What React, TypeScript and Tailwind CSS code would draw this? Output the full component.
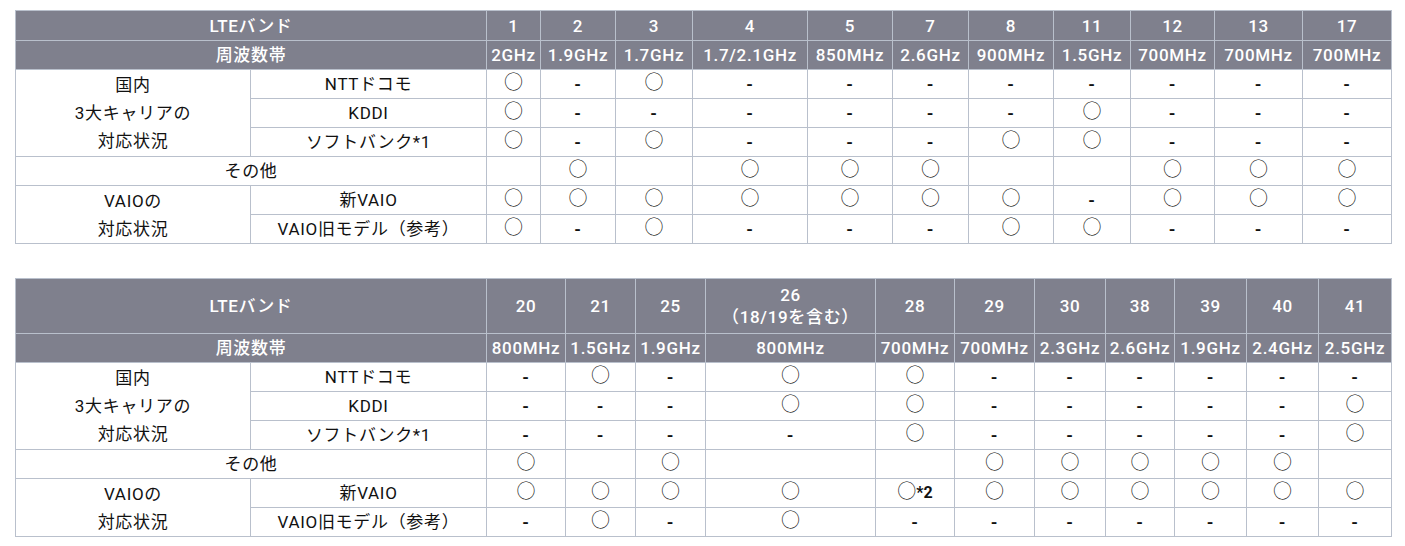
const font = { fontFamily: '"Roboto", "Noto Sans CJK JP", sans-serif' };

type Table = {
  widths: number[];
  bands: string[][];
  freqs: string[];
  rows: string[][];
  headHeight: number;
};

const tables: Table[] = [
  {
    widths: [235, 236, 54, 75, 77, 115, 85, 76, 85, 77, 84, 88, 89],
    bands: [['1'], ['2'], ['3'], ['4'], ['5'], ['7'], ['8'], ['11'], ['12'], ['13'], ['17']],
    freqs: ['2GHz', '1.9GHz', '1.7GHz', '1.7/2.1GHz', '850MHz', '2.6GHz', '900MHz', '1.5GHz', '700MHz', '700MHz', '700MHz'],
    rows: [
      ['○', '-', '○', '-', '-', '-', '-', '-', '-', '-', '-'],
      ['○', '-', '-', '-', '-', '-', '-', '○', '-', '-', '-'],
      ['○', '-', '○', '-', '-', '-', '○', '○', '-', '-', '-'],
      ['', '○', '', '○', '○', '○', '', '', '○', '○', '○'],
      ['○', '○', '○', '○', '○', '○', '○', '-', '○', '○', '○'],
      ['○', '-', '○', '-', '-', '-', '○', '○', '-', '-', '-'],
    ],
    headHeight: 30,
  },
  {
    widths: [235, 236, 79, 70, 70, 170, 79, 80, 71, 69, 72, 72, 73],
    bands: [['20'], ['21'], ['25'], ['26', '（18/19を含む）'], ['28'], ['29'], ['30'], ['38'], ['39'], ['40'], ['41']],
    freqs: ['800MHz', '1.5GHz', '1.9GHz', '800MHz', '700MHz', '700MHz', '2.3GHz', '2.6GHz', '1.9GHz', '2.4GHz', '2.5GHz'],
    rows: [
      ['-', '○', '-', '○', '○', '-', '-', '-', '-', '-', '-'],
      ['-', '-', '-', '○', '○', '-', '-', '-', '-', '-', '○'],
      ['-', '-', '-', '-', '○', '-', '-', '-', '-', '-', '○'],
      ['○', '', '○', '', '', '○', '○', '○', '○', '○', ''],
      ['○', '○', '○', '○', '○*2', '○', '○', '○', '○', '○', '○'],
      ['-', '○', '-', '○', '-', '-', '-', '-', '-', '-', '-'],
    ],
    headHeight: 55,
  },
];

const carriers = ['NTTドコモ', 'KDDI', 'ソフトバンク*1'];
const models = ['新VAIO', 'VAIO旧モデル（参考）'];

const th = 'border border-[#b9c0cc] bg-[#7f808d] text-white font-medium text-center align-middle p-0';
const td = 'border border-[#b9c0cc] text-[#111] text-center align-middle p-0 h-[29px]';

// 丸印はグリフを少し大きく、上寄せにする
function Circle() {
  return <span className="inline-block text-[19px] leading-none font-light mb-[5px] tracking-normal">○</span>;
}

function Cell({ v }: { v: string }) {
  if (v === '○*2') {
    return (
      <span>
        <Circle />
        <span className="font-bold text-[16px] tracking-normal">*2</span>
      </span>
    );
  }
  if (v === '○') return <Circle />;
  if (v === '-') return <span className="font-bold">-</span>;
  return <span>{v}</span>;
}

function BandTable({ t }: { t: Table }) {
  return (
    <table className="table-fixed border-collapse w-[1377px] text-[17px] tracking-[0.04em] leading-[22px]" style={font}>
      <colgroup>
        {t.widths.map((w, i) => (
          <col key={i} style={{ width: w }} />
        ))}
      </colgroup>
      <thead>
        <tr style={{ height: t.headHeight }}>
          <th colSpan={2} className={th}>LTEバンド</th>
          {t.bands.map((b, i) => (
            <th key={i} className={th}>
              {b.map((line, j) => (
                <div key={j}>{line}</div>
              ))}
            </th>
          ))}
        </tr>
        <tr className="h-[29px]">
          <th colSpan={2} className={th}>周波数帯</th>
          {t.freqs.map((f, i) => (
            <th key={i} className={th}>{f}</th>
          ))}
        </tr>
      </thead>
      <tbody>
        {t.rows.map((row, r) => (
          <tr key={r}>
            {r === 0 && (
              <td rowSpan={3} className={`${td} leading-[28px]`}>
                国内<br />3大キャリアの<br />対応状況
              </td>
            )}
            {r === 4 && (
              <td rowSpan={2} className={`${td} leading-[28px]`}>
                VAIOの<br />対応状況
              </td>
            )}
            {r < 3 && <td className={td}>{carriers[r]}</td>}
            {r === 3 && <td colSpan={2} className={td}>その他</td>}
            {r > 3 && <td className={td}>{models[r - 4]}</td>}
            {row.map((v, i) => (
              <td key={i} className={td}>
                <Cell v={v} />
              </td>
            ))}
          </tr>
        ))}
      </tbody>
    </table>
  );
}

export default function App() {
  return (
    <div className="bg-white w-[1405px] h-[546px] pt-[10px] pl-[15px] flex flex-col gap-[34px]">
      {tables.map((t, i) => (
        <BandTable key={i} t={t} />
      ))}
    </div>
  );
}
